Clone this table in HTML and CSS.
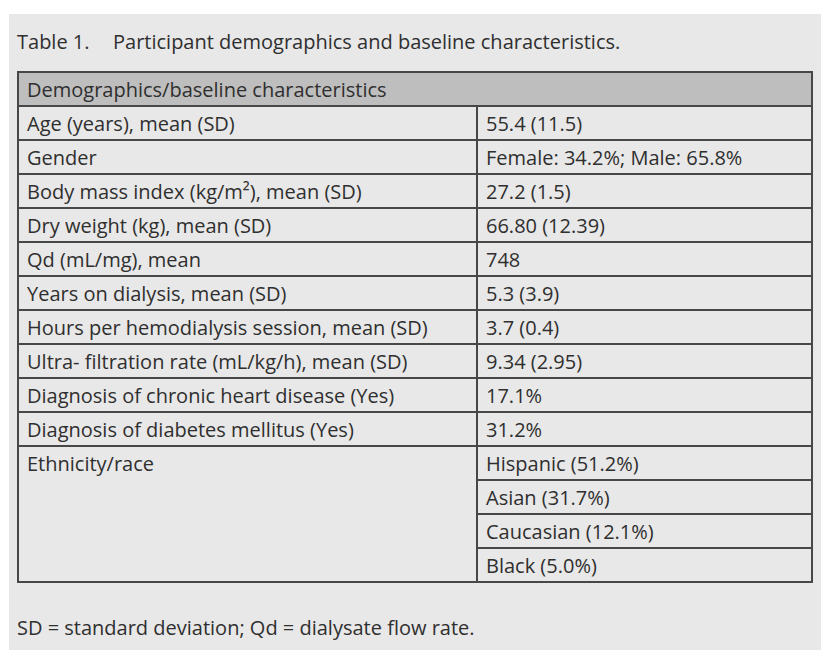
FILE: index.html
```html
<!DOCTYPE html>
<html>
<head>
<meta charset="utf-8">
<link rel="stylesheet" href="styles.css">
</head>
<body>
<div class="panel">
  <p class="caption"><span class="label">Table 1.</span>Participant demographics and baseline characteristics.</p>
  <table class="data">
    <colgroup><col class="c1"><col class="c2"></colgroup>
    <thead>
      <tr><th colspan="2">Demographics/baseline characteristics</th></tr>
    </thead>
    <tbody>
      <tr><td>Age (years), mean (SD)</td><td>55.4 (11.5)</td></tr>
      <tr><td>Gender</td><td>Female: 34.2%; Male: 65.8%</td></tr>
      <tr><td>Body mass index (kg/m²), mean (SD)</td><td>27.2 (1.5)</td></tr>
      <tr><td>Dry weight (kg), mean (SD)</td><td>66.80 (12.39)</td></tr>
      <tr><td>Qd (mL/mg), mean</td><td>748</td></tr>
      <tr><td>Years on dialysis, mean (SD)</td><td>5.3 (3.9)</td></tr>
      <tr><td>Hours per hemodialysis session, mean (SD)</td><td>3.7 (0.4)</td></tr>
      <tr><td>Ultra- filtration rate (mL/kg/h), mean (SD)</td><td>9.34 (2.95)</td></tr>
      <tr><td>Diagnosis of chronic heart disease (Yes)</td><td>17.1%</td></tr>
      <tr><td>Diagnosis of diabetes mellitus (Yes)</td><td>31.2%</td></tr>
      <tr><td rowspan="4">Ethnicity/race</td><td>Hispanic (51.2%)</td></tr>
      <tr><td>Asian (31.7%)</td></tr>
      <tr><td>Caucasian (12.1%)</td></tr>
      <tr><td>Black (5.0%)</td></tr>
    </tbody>
  </table>
  <p class="note">SD = standard deviation; Qd = dialysate flow rate.</p>
</div>
</body>
</html>
```

FILE: styles.css
```css
html, body {
  margin: 0;
  padding: 0;
  background: #ffffff;
}
body {
  font-family: "Open Sans", "Noto Sans", sans-serif;
  color: #2f2f2f;
  font-size: 20px;
}
.panel {
  margin: 14px 0 0 9px;
  width: 812px;
  height: 636px;
  background: #e8e8e8;
  padding: 0 0 0 8px;
  box-sizing: border-box;
}
.caption {
  margin: 0;
  padding-top: 16px;
  height: 57px;
  box-sizing: border-box;
  line-height: 24px;
}
.label {
  display: inline-block;
  width: 96px;
}
.data {
  border-collapse: collapse;
  width: 796px;
  table-layout: fixed;
}
.c1 {
  width: 459px;
}
.data th,
.data td {
  height: 30px;
  line-height: 30px;
  padding: 2px 0 0 8px;
  border: 2px solid #474747;
  vertical-align: top;
  text-align: left;
  font-weight: normal;
  white-space: nowrap;
}
.data th {
  background: #bebebe;
}
.note {
  margin: 0;
  padding-top: 33px;
  line-height: 24px;
}
```
